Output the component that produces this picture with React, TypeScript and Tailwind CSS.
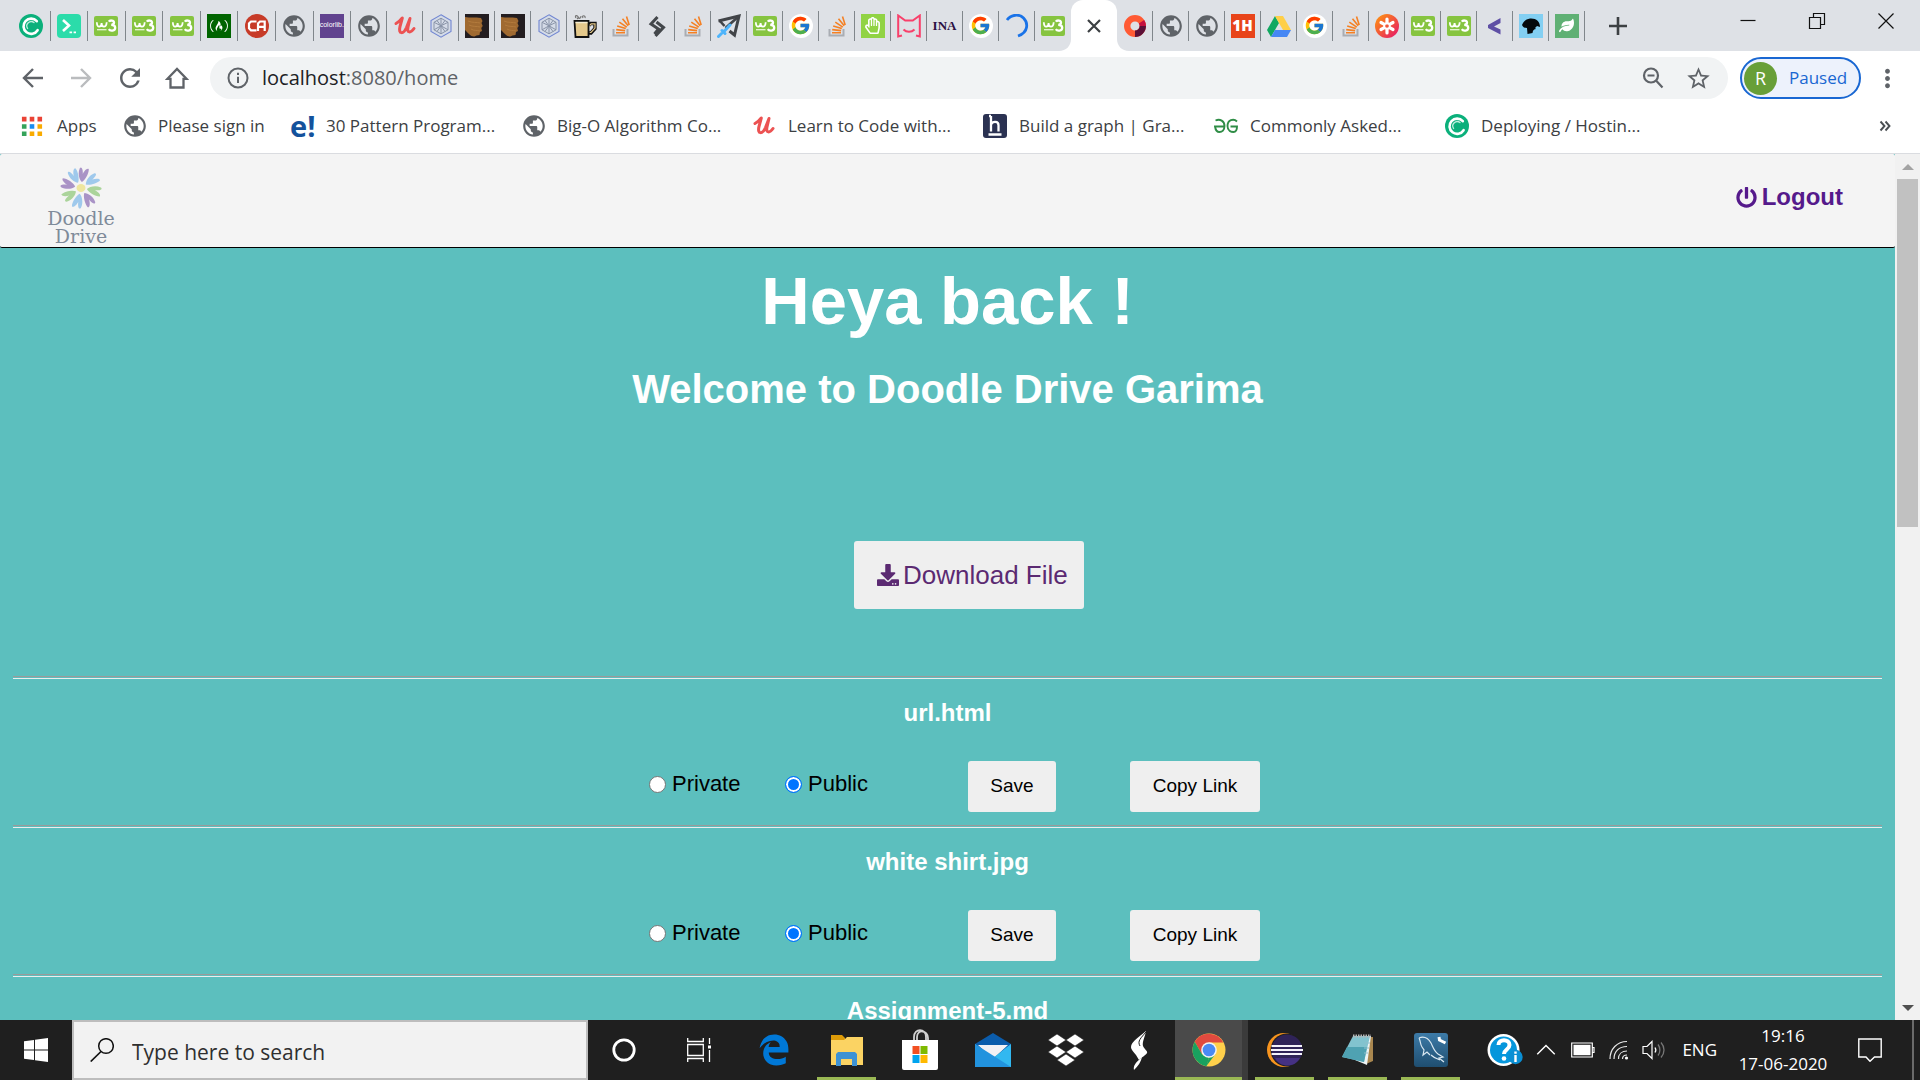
import type { ReactNode } from "react";
import { FaDownload, FaPowerOff, FaFreeCodeCamp, FaLeaf, FaEdgeLegacy, FaRegHandPaper } from "react-icons/fa";
import { MdPublic, MdStarBorder, MdRefresh, MdMoreVert } from "react-icons/md";
import { FcGoogle } from "react-icons/fc";

const uiFont = "font-['Segoe_UI','Open_Sans',sans-serif]";
const pageFont = "font-['Liberation_Sans',Arial,sans-serif]";

function Svg({ children, size = "size-6" }: { children: ReactNode; size?: string }) {
  return (
    <svg viewBox="0 0 24 24" className={`${size} shrink-0`} fill="none" aria-hidden="true">
      {children}
    </svg>
  );
}

const Crescent = () => (
  <Svg>
    <circle cx="12" cy="12" r="12" fill="#0bb07b" />
    <path d="M18.6 16.2A7.6 7.6 0 1 1 17.8 7.2" stroke="#fff" strokeWidth="2.6" strokeLinecap="round" />
    <path d="M8.6 14.5A4.4 4.4 0 0 1 15 8.6" stroke="#bdeedd" strokeWidth="1.3" strokeLinecap="round" />
  </Svg>
);
const Prompt = () => (
  <Svg>
    <rect width="24" height="24" rx="4" fill="#2bdcaa" />
    <path d="m6 6 6 5.5L6 17" stroke="#fff" strokeWidth="2.6" />
    <path d="M12.5 18.3h2.6M16.6 18.3h2.4" stroke="#fff" strokeWidth="1.8" />
  </Svg>
);
const W3 = () => (
  <Svg>
    <rect y="2" width="24" height="20" rx="2" fill="#86c440" />
    <path d="M2.8 8.2c.2 3 1 4.5 2.4 4.5S7.5 11 7.6 9c0 2.5.9 3.7 2.3 3.7 1.6 0 2.6-1.7 2.8-4.4" stroke="#fff" strokeWidth="1.8" />
    <path d="M14.8 7.6c1.200-1.8 5.200-1.3 5.200.9 0 1.6-1.4 2.3-2.8 2.3 1.8 0 4 .7 4 2.9 0 3.300-4.900 3.900-6.400 1.500" stroke="#fff" strokeWidth="2.300" />
    <path d="M3 15.7h9.5" stroke="#e8f5d8" strokeWidth="1.300" />
  </Svg>
);
const Fcc = () => (
  <span className="flex size-6 items-center justify-center bg-[#006400] text-white">
    <FaFreeCodeCamp className="size-[18px]" />
  </span>
);
const Ca = () => (
  <Svg>
    <circle cx="12" cy="12" r="12" fill="#c73b28" />
    <path d="M11.500 7.500H6l-2 2v4.800l2 2h5.500M13 17V9.500l2-2h4.700v9.500M13 12.800h6.500" stroke="#fff" strokeWidth="2.200" />
  </Svg>
);
const Globe = () => <MdPublic className="size-[26px] shrink-0 text-[#5f6368]" />;
const Colorlib = () => (
  <span className="flex size-6 items-center justify-center bg-[#61438f] font-['Liberation_Sans',sans-serif] text-[7px] text-white">
    colorlib.
  </span>
);
const Udemy = () => (
  <Svg>
    <path d="M3 9.500C5 8.500 7.500 6.500 9.300 4L7 12.500c-2 8 3.500 8 6.500 1L17 4.500l-2 8.500c-1.200 6 2.500 6.500 6 1.500" stroke="#ec5252" strokeWidth="3" strokeLinecap="round" strokeLinejoin="round" />
  </Svg>
);
const Hexa = () => (
  <Svg>
    <path d="M12 .8 22 6.500v11L12 23.200 2 17.500v-11z" fill="#d4dbe7" stroke="#7186d2" strokeWidth="1.100" />
    <path d="M12 4.200 19 8.300v7.500l-7 4-7-4V8.300zM5 8.300l7 3.500 7-3.500M12 4.200v15.600M5 15.800l7-4 7 4M8 6.500l8 11M16 6.500l-8 11" stroke="#8994a8" strokeWidth="1" />
  </Svg>
);
const Wood = () => (
  <Svg>
    <path d="M0 0h24v24H0z" fill="#231d20" />
    <path d="M0 3c5 1 10 0 16 1l1.500 3-1 2 1.200 3-1.400 2 .7 3-2 1-.5 3-3 .5-2 1C6 23 3 19 0 16z" fill="#a06a31" />
    <path d="M3 7c4 2 9 1 12 2M4 11c4 2 8 1 11 2M6 15c3 2 6 1 9 2" stroke="#b37b3d" strokeWidth="1" />
  </Svg>
);
const Mug = () => (
  <Svg>
    <path d="M3 4c-2-3 2-3 2-1s3 2 3-1M10 4c-2-3 3-3 2 0M4 5l2-2" stroke="#777" strokeWidth="1.200" />
    <path d="M16 11.500 17.500 9.500h4.500v5L18 19h-2" stroke="#111" strokeWidth="3.400" />
    <path d="M16.500 11.500 18.200 9.800h3.800v4.300L18 18.500h-1.500" stroke="#e5c98c" strokeWidth="1.200" />
    <path d="M1.500 7h14v16H2.500z" fill="#e5c98c" stroke="#111" strokeWidth="1.800" />
    <path d="M2.500 8.500h12" stroke="#f5ecd1" strokeWidth="1.500" />
  </Svg>
);
const Stack = () => (
  <Svg>
    <path d="M4.500 15v6.500h14V15" stroke="#a9adb3" strokeWidth="2" />
    <path d="M7 18.800h9M7.200 15.600l8.900 1M8.200 12l8.600 2.400M10.300 8.200l7.500 4.900M13.500 4.700l5.700 7M17.500 2.500l2.700 8.500" stroke="#f48024" strokeWidth="1.600" />
  </Svg>
);
const Diamond = () => (
  <Svg>
    <path d="m12.500 3-6.500 7 7.500 5-4 5M11.500 8l7 5.500-8 8.500" stroke="#43474b" strokeWidth="3" />
  </Svg>
);
const Arrow = () => (
  <Svg>
    <path d="M1.500 7 22 2l-4.500 19-5-4" stroke="#414448" strokeWidth="3" />
    <path d="m2.500 6.500 5 5.500M21.500 2.500 8.500 14" stroke="#414448" strokeWidth="2.600" />
    <path d="m13 11-6 6.500M4.500 19.500 1.500 22.500M8 19.500l-3-3" stroke="#4db4fb" strokeWidth="3" strokeLinecap="round" />
  </Svg>
);
const Google = () => (
  <span className="flex size-6 items-center justify-center rounded-full bg-white">
    <FcGoogle className="size-[21px]" />
  </span>
);
const Hand = () => (
  <span className="flex size-6 items-center justify-center bg-[#91d344] text-white">
    <FaRegHandPaper className="size-[17px]" />
  </span>
);
const PinkM = () => (
  <Svg>
    <path d="M5 21.500 1.200 22.500V1.500l7 5h7.600l7-5v21L19 21.500M6.500 15.500c3 3 8 3 11 0" stroke="#f8406b" strokeWidth="2" />
  </Svg>
);
const Isa = () => (
  <span className="font-['Liberation_Serif',serif] text-[13px] font-bold text-[#2b1043]">INA</span>
);
const Spinner = () => (
  <Svg>
    <path d="M2 6C6 .500 14-.5 18.500 4s5.500 14-5.500 18" stroke="#1a73e8" strokeWidth="2.800" />
  </Svg>
);
const RedRing = () => (
  <Svg>
    <circle cx="12" cy="12" r="7.800" stroke="#ff5a34" strokeWidth="6.400" />
    <path d="M19.800 12A7.800 7.800 0 0 1 12 19.800" stroke="#5c1038" strokeWidth="6.400" />
    <path d="M18.500 7.800A7.800 7.800 0 0 1 19.800 12" stroke="#c4103f" strokeWidth="6.400" />
  </Svg>
);
const OneH = () => (
  <span className="flex size-6 items-center justify-center bg-[#e8441a] font-['Open_Sans',sans-serif] text-[15px] font-extrabold text-white">
    1H
  </span>
);
const Drive = () => (
  <Svg>
    <path d="M8 2 0 16l4 7 8-14z" fill="#11a861" />
    <path d="M8 2h8l8 14h-8z" fill="#ffcf48" />
    <path d="M8 16h16l-4 7H4z" fill="#4687f4" />
  </Svg>
);
const Asterisk = () => (
  <Svg>
    <defs>
      <linearGradient id="ast" x1="0" y1="0" x2="1" y2="1">
        <stop stopColor="#ff9a0a" />
        <stop offset="1" stopColor="#e5126d" />
      </linearGradient>
    </defs>
    <circle cx="12" cy="12" r="12" fill="url(#ast)" />
    <path d="M12 5v4M12 15v4M6 8.500l3 1.700M15 13.800l3 1.700M6 15.500l3-1.700M15 10.200l3-1.700" stroke="#fff" strokeWidth="3.200" strokeLinecap="round" />
    <circle cx="12" cy="12" r="2.800" stroke="#fff" strokeWidth="1.800" />
  </Svg>
);
const Less = () => (
  <Svg>
    <path d="M17.500 4v5L11 12.500l6.500 3V20.500L5 14v-3z" fill="#5e4fa5" />
  </Svg>
);
const Head = () => (
  <Svg>
    <path d="M0 0h24v24H0z" fill="#83cff2" />
    <path d="M3 11c1-3 4-6 8-6.500 6-.5 10 3 10 8.500l-3-1-2 2 1 1c-2 0-3 1-3.500 4l-5 1-.5-6c-2 0-4-.5-5-3z" fill="#05090c" />
  </Svg>
);
const Leaf = () => (
  <span className="flex size-6 items-center justify-center bg-[#5fb074] text-white">
    <FaLeaf className="size-[15px]" />
  </span>
);

const firstTabs = [Crescent, Prompt, W3, W3, W3, Fcc, Ca, Globe, Colorlib];
const middleTabs = [Globe, Udemy, Hexa, Wood, Wood, Hexa, Mug, Stack, Diamond, Stack, Arrow, W3, Google, Stack, Hand, PinkM, Isa, Google, Spinner, W3];
const lastTabs = [RedRing, Globe, Globe, OneH, Drive, Google, Stack, Asterisk, W3, W3, Less, Head, Leaf];

function TabGroup({ icons, width, openEnd }: { icons: (() => ReactNode)[]; width: string; openEnd?: boolean }) {
  return (
    <div className={`${width} flex h-full items-center`}>
      {icons.map((Icon, i) => (
        <button
          key={i}
          aria-label={`Tab ${i + 1}`}
          className={`flex h-[30px] min-w-0 flex-1 items-center justify-center border-r ${
            openEnd && i === icons.length - 1 ? "border-transparent" : "border-[#80868b]"
          }`}
        >
          <Icon />
        </button>
      ))}
    </div>
  );
}

function TabStrip() {
  return (
    <div className="flex h-[51px] shrink-0 items-center bg-[#dee1e6] pl-[13px]">
      <TabGroup icons={firstTabs} width="w-[338px]" />
      <TabGroup icons={middleTabs} width="w-[720px]" openEnd />
      <div className="relative h-full w-[46px] rounded-t-xl bg-white">
        <svg viewBox="0 0 12 12" className="absolute bottom-0 -left-3 size-3" aria-hidden="true">
          <path d="M12 0v12H0C7 12 12 7 12 0z" fill="#fff" />
        </svg>
        <svg viewBox="0 0 12 12" className="absolute -right-3 bottom-0 size-3" aria-hidden="true">
          <path d="M0 0v12h12C5 12 0 7 0 0z" fill="#fff" />
        </svg>
        <button aria-label="Close tab" className="flex h-full w-full items-center justify-center">
          <Svg>
            <path d="m6 6 12 12M18 6 6 18" stroke="#3c4043" strokeWidth="2.200" />
          </Svg>
        </button>
      </div>
      <TabGroup icons={lastTabs} width="w-[468px]" />
      <button aria-label="New tab" className="ml-[21px]">
        <Svg>
          <path d="M12 3v18M3 12h18" stroke="#3c4043" strokeWidth="2.600" />
        </Svg>
      </button>
      <div className="ml-auto flex h-[42px] self-start">
        {[
          ["Minimize", "M4.500 11.500h15"],
          ["Restore", "M4.500 8.500h11v11h-11zM8.500 8V4.500h11v11H16"],
          ["Close", "m4.500 4.500 15 15M19.500 4.500l-15 15"],
        ].map(([label, d]) => (
          <button key={label} aria-label={label} className="flex w-[69px] items-center justify-center">
            <Svg>
              <path d={d} stroke="#111" strokeWidth="1.200" />
            </Svg>
          </button>
        ))}
      </div>
    </div>
  );
}

function Toolbar() {
  return (
    <div className="flex h-[54px] shrink-0 items-center bg-white pl-[21px] text-[#5f6368]">
      <button aria-label="Back" className="w-12">
        <Svg>
          <path d="M22 12H3.500M12 3 3 12l9 9" stroke="#5f6368" strokeWidth="2.400" />
        </Svg>
      </button>
      <button aria-label="Forward" className="w-12">
        <Svg>
          <path d="M2 12h18.500M12 3l9 9-9 9" stroke="#babcbe" strokeWidth="2.400" />
        </Svg>
      </button>
      <button aria-label="Reload" className="w-12">
        <MdRefresh className="-ml-0.5 size-[30px]" />
      </button>
      <button aria-label="Home" className="w-[45px]">
        <Svg>
          <path d="M2.500 12.800 12 3l9.500 9.800H18.500V21.500h-13v-8.700z" stroke="#5f6368" strokeWidth="2.300" />
        </Svg>
      </button>
      <div className="flex h-[42px] min-w-0 flex-1 items-center rounded-full bg-[#f1f3f4] px-4">
        <Svg>
          <circle cx="12" cy="12" r="9.500" stroke="#5f6368" strokeWidth="2" />
          <path d="M12 10.800V17M12 6.800v2.200" stroke="#5f6368" strokeWidth="2" />
        </Svg>
        <p className="ml-3 text-[20px] leading-7 text-[#5f6368]">
          <span className="text-[#202124]">localhost</span>:8080/home
        </p>
        <div className="ml-auto flex items-center gap-5">
          <button aria-label="Zoom">
            <Svg>
              <circle cx="10" cy="9.500" r="7" stroke="#5f6368" strokeWidth="2.200" />
              <path d="m15 14.500 6.500 7M6.500 9.500h7" stroke="#5f6368" strokeWidth="2.200" />
            </Svg>
          </button>
          <button aria-label="Bookmark this page">
            <MdStarBorder className="size-[27px]" />
          </button>
        </div>
      </div>
      <button className="ml-3 flex h-[42px] w-[121px] items-center rounded-full border-2 border-[#1967d2] bg-[#edf2fc] pl-0.5 text-[17px] text-[#1967d2]">
        <span className="flex size-[33px] items-center justify-center rounded-full bg-[#689f38] text-[18px] text-white">R</span>
        <span className="ml-3">Paused</span>
      </button>
      <button aria-label="Menu" className="mr-[18px] ml-3">
        <MdMoreVert className="size-[29px]" />
      </button>
    </div>
  );
}

const AppsGrid = () => (
  <Svg size="size-[22px]">
    <path d="M1 2h5v5H1zM9.500 2h5v5h-5zM18 2h5v5h-5z" fill="#ea4335" />
    <path d="M1 10h5v5H1zM1 18h5v5H1z" fill="#34a35a" />
    <path d="M9.500 10h5v5h-5z" fill="#1a8cf0" />
    <path d="M18 10h5v5h-5zM9.500 18h5v5h-5zM18 18h5v5h-5z" fill="#f9ab00" />
  </Svg>
);
const Ebang = () => (
  <span className="w-6 font-['Open_Sans',sans-serif] text-[29px] leading-6 font-bold text-[#14529c]">e!</span>
);
const HIcon = () => (
  <Svg>
    <rect width="24" height="24" rx="3" fill="#2b3252" />
    <path d="M8 2v15.500M8 10.500c1.500-3.500 7.500-3.500 7.500.8v6.200M5.500 20.500h13M6 2h2" stroke="#fff" strokeWidth="2.300" />
  </Svg>
);
const Gfg = () => (
  <Svg>
    <path d="M1.500 6.500c4.500-2 9 .5 9 5.500 0 4-2.500 6-5 6s-4-2-4.500-5.500h9.500M23 7.500c-3.500-3.500-9.500-1.500-9.500 4.500 0 5 4 6 6 6 2.500 0 3.500-2 3.500-5.500h-6.500" stroke="#2f8d46" strokeWidth="1.900" />
  </Svg>
);

const bookmarks: { label: string; icon: () => ReactNode; width: string; gap: string }[] = [
  { label: "Apps", icon: AppsGrid, width: "w-[101px]", gap: "gap-[14px]" },
  { label: "Please sign in", icon: Globe, width: "w-[168px]", gap: "gap-[10px]" },
  { label: "30 Pattern Program...", icon: Ebang, width: "w-[231px]", gap: "gap-3" },
  { label: "Big-O Algorithm Co...", icon: Globe, width: "w-[231px]", gap: "gap-[10px]" },
  { label: "Learn to Code with...", icon: Udemy, width: "w-[231px]", gap: "gap-3" },
  { label: "Build a graph | Gra...", icon: HIcon, width: "w-[231px]", gap: "gap-3" },
  { label: "Commonly Asked...", icon: Gfg, width: "w-[231px]", gap: "gap-3" },
  { label: "Deploying / Hostin...", icon: Crescent, width: "w-[231px]", gap: "gap-3" },
];

function BookmarksBar() {
  return (
    <nav className="flex h-[49px] shrink-0 items-center border-b border-[#dadce0] bg-white pb-1.5 pl-[21px] text-[17px] text-[#3c4043]">
      {bookmarks.map(({ label, icon: Icon, width, gap }) => (
        <a key={label} href="#" className={`${width} ${gap} flex shrink-0 items-center whitespace-nowrap`}>
          <Icon />
          {label}
        </a>
      ))}
      <button aria-label="More bookmarks" className="mr-[29px] ml-auto">
        <svg viewBox="0 0 12 12" className="size-3" fill="none">
          <path d="m1.500 1.500 4 4.500-4 4.500M6.500 1.500l4 4.500-4 4.500" stroke="#4a4e52" strokeWidth="1.900" />
        </svg>
      </button>
    </nav>
  );
}

const petals = ["#a993c6", "#9fc9ec", "#abd49b", "#a993c6", "#9fc9ec", "#abd49b", "#a993c6", "#9fc9ec"];

function DoodleLogo() {
  return (
    <a href="#" className="flex w-[70px] flex-col items-center font-['DejaVu_Serif',serif] text-[19px] leading-[18px] text-[#7f8b9a]">
      <svg viewBox="-24 -21 48 42" className="h-[42px] w-12" aria-hidden="true">
        {petals.map((fill, i) => (
          <path
            key={i}
            transform={`rotate(${8 + i * 46})`}
            d="M0-6C-3-8-5.500-14-4-19.500-2.500-22-.5-19-.2-14 .5-17 3-21 5-20 6-16 3-8 0-6z"
            fill={fill}
          />
        ))}
        <ellipse rx="4.500" ry="4" fill="#eee69f" />
      </svg>
      <span>Doodle</span>
      <span>Drive</span>
    </a>
  );
}

function Visibility({ name, label, width, checked }: { name: string; label: string; width: string; checked?: boolean }) {
  return (
    <label className={`${width} flex h-[46px] items-center gap-[6px] self-start text-[22px] leading-6 text-black`}>
      <input
        type="radio"
        name={name}
        defaultChecked={checked}
        className="size-[17px] appearance-none rounded-full border border-[#767676] bg-white checked:border-[#0075ff] checked:bg-[#0075ff] checked:shadow-[inset_0_0_0_2px_#fff]"
      />
      {label}
    </label>
  );
}

function FileRow({ name }: { name: string }) {
  return (
    <section>
      <hr className="h-[3px] border-t border-b border-t-[#9a9a9a] border-b-[#eeeeee]" />
      <div className="flex flex-col items-center pt-5 pb-[13px]">
        <h3 className="text-[24px] leading-7 font-bold text-white">{name}</h3>
        <form className="mt-[34px] flex h-[51px] pl-[14px]">
          <Visibility name={name} label="Private" width="w-[136px]" />
          <Visibility name={name} label="Public" width="w-[183px]" checked />
          <button type="button" className="w-[88px] rounded-[3px] bg-[#efefef] text-[19px] text-black">
            Save
          </button>
          <button type="button" className="ml-[74px] w-[130px] rounded-[3px] bg-[#efefef] text-[19px] text-black">
            Copy Link
          </button>
        </form>
      </div>
    </section>
  );
}

function Page() {
  return (
    <div className={`${pageFont} flex min-h-0 flex-1`}>
      <main className="min-w-0 flex-1 overflow-hidden bg-[#5cbfbe]">
        <header className="flex h-[94px] items-start justify-between rounded-xs border-b border-black bg-[#f4f4f4] pt-[13px] pr-[52px] pl-[46px]">
          <DoodleLogo />
          <a href="#" className="mt-4 flex items-center gap-[5px] text-[24px] leading-7 font-bold text-[#551a8b]">
            <FaPowerOff className="size-[21px]" />
            Logout
          </a>
        </header>
        <div className="flex flex-col items-center pt-[15px] text-white">
          <h1 className="text-[67px] leading-[76px] font-bold">Heya back !</h1>
          <h2 className="mt-7 text-[40px] leading-[44px] font-bold">Welcome to Doodle Drive Garima</h2>
          <button className="mt-[130px] ml-[43px] flex h-[68px] w-[230px] items-center gap-1 rounded-[3px] bg-[#efefef] pl-[23px] text-[26px] leading-8 whitespace-nowrap text-[#5b2a72]">
            <FaDownload className="size-[22px] shrink-0" />
            Download File
          </button>
        </div>
        <div className="mx-[13px] mt-[67px]">
          {["url.html", "white shirt.jpg", "Assignment-5.md"].map((name) => (
            <FileRow key={name} name={name} />
          ))}
        </div>
      </main>
      <div className="flex w-[25px] flex-col items-center justify-between bg-[#f1f1f1]">
        <div className="flex w-full flex-col items-center">
          <svg viewBox="0 0 12 6" className="mt-2.5 mb-[9px] h-1.5 w-3">
            <path d="M0 6 6 0l6 6z" fill="#a3a3a3" />
          </svg>
          <div className="h-[348px] w-[21px] bg-[#c1c1c1]" />
        </div>
        <svg viewBox="0 0 12 6" className="mb-[9px] h-1.5 w-3">
          <path d="M0 0h12L6 6z" fill="#505050" />
        </svg>
      </div>
    </div>
  );
}

const Folder = () => (
  <svg viewBox="0 0 36 36" className="size-9">
    <path d="M2 3h11l3 3v5H2z" fill="#dd9b08" />
    <path d="M2 8h13l3-3h16v28H2z" fill="#fbd363" />
    <path d="M7 34V22l2-2h17l2 2v12h-5v-7H12v7z" fill="#3e92d4" />
  </svg>
);
const Store = () => (
  <svg viewBox="0 0 36 42" className="h-[42px] w-9" fill="none">
    <path d="M12 12V8c0-9 12-9 12 0v4M15 12V8c0-8 11-7 11 1v3" stroke="#d0d0d0" strokeWidth="1.800" />
    <path d="M0 11h36v28q0 2-2 2H2q-2 0-2-2z" fill="#fff" />
    <path d="M10.500 17H17.500v8h-7z" fill="#f25022" />
    <path d="M18.500 17h7v8h-7z" fill="#7fba00" />
    <path d="M10.500 26h7v8h-7z" fill="#00a4ef" />
    <path d="M18.500 26h7v8h-7z" fill="#ffb900" />
  </svg>
);
const Mail = () => (
  <svg viewBox="0 0 36 36" className="size-9">
    <path d="M0 12 18 1l18 11v8H0z" fill="#0b5cab" />
    <path d="M3 13h30l-15 14z" fill="#f3f1f4" />
    <path d="M0 12v23h36V12L18 26z" fill="#32b8f0" />
    <path d="M0 12v23h36z" fill="#2293de" />
  </svg>
);
const DropboxIcon = () => (
  <svg viewBox="0 0 36 32" className="h-8 w-9" fill="#fff">
    <path d="m9 0 9 6-9 6-9-6zM27 0l9 6-9 6-9-6zM9 12l9 6-9 6-9-6zM27 12l9 6-9 6-9-6zM18 20l9 6-9 6-9-6z" stroke="#1f1f1f" strokeWidth=".6" />
  </svg>
);
const Lightning = () => (
  <svg viewBox="0 0 20 44" className="h-11 w-5" fill="#fff">
    <path d="M17 3C11 8 2 14 2 19c0 3 3 5 5 8l3 5c3-3 7-5 8-7s-3-4-4-7c-1-4 2-9 3-15z" />
    <path d="M11 31c-4 3-7 7-6 11 4-4 7-8 8-13z" />
    <path d="M17 4C12 10 8 13 11 18" stroke="#1f1f1f" fill="none" strokeWidth="1" />
  </svg>
);
const Chrome = () => (
  <svg viewBox="0 0 34 34" className="size-[34px]">
    <circle cx="17" cy="17" r="16.500" fill="#ffd04b" />
    <path d="M2.700 8.700A16.500 16.500 0 0 1 31.300 9.500H17L9.800 21z" fill="#e04a3f" />
    <path d="M2.700 8.700 10 21.200 17 24.800l-2.500 8.500A16.500 16.500 0 0 1 2.700 8.700z" fill="#19a15f" />
    <path d="M14.200 33.200 23.500 21 17 24.500z" fill="#19a15f" />
    <circle cx="17" cy="17" r="7.800" fill="#f3f3f3" />
    <circle cx="17" cy="17" r="6.300" fill="#4a8af4" />
  </svg>
);
const Eclipse = () => (
  <svg viewBox="0 0 36 34" className="h-[34px] w-9">
    <circle cx="17" cy="17" r="17" fill="#f7941e" />
    <circle cx="20" cy="17" r="16.500" fill="#1f1f1f" />
    <circle cx="20" cy="17" r="15.500" fill="#2f2358" />
    <path d="M8 25h25c-5 10-20 10-25 0z" fill="#453183" />
    <path d="M4.500 13H35M4 17h32M4.500 21H35" stroke="#f4f2fa" strokeWidth="2" />
  </svg>
);
const Notepad = () => (
  <svg viewBox="0 0 34 34" className="size-[34px]">
    <path d="M26 4h6v24l-7 3z" fill="#a9874f" />
    <path d="M12 3h18l-4 29-12-5z" fill="#eef4f5" />
    <path d="M12 3h17l-6 26L1 24z" fill="#82c3cf" />
    <path d="M6 14h20l-3 15L1 24z" fill="#4fa2b2" />
    <path d="M24 10h5M23 15h5M23 20h4" stroke="#8fbecb" />
    <path d="M12 3h18" stroke="#b7b7b7" strokeWidth="3" strokeDasharray="1.500 1" />
  </svg>
);
const Dolphin = () => (
  <svg viewBox="0 0 34 34" className="size-[34px]" fill="none">
    <defs>
      <linearGradient id="sea" x1="0" y1="0" x2="0" y2="1">
        <stop stopColor="#3d7ba8" />
        <stop offset="1" stopColor="#1f4e70" />
      </linearGradient>
    </defs>
    <rect width="34" height="34" rx="3" fill="url(#sea)" />
    <path d="M5 5c5-2 9 0 12 5 2 4 3 8 7 11l5 3-4 1 5 4M5 5c2 4 1 6 3 9l2 3-1 5 4-3 3 3M17 22c3 3 6 4 9 5" stroke="#dbe9f2" strokeWidth="1.200" />
    <path d="m25 4 .5 3 6 3" stroke="#fff" strokeWidth="3" />
  </svg>
);
const Help = () => (
  <svg viewBox="0 0 36 34" className="h-[34px] w-9" fill="none">
    <circle cx="16.500" cy="17" r="16" fill="#fff" />
    <circle cx="16.500" cy="17" r="13.500" fill="#0596dc" />
    <path d="M11.500 12c0-6.500 11-6.500 11 0 0 4.500-5.500 4.500-5.500 9" stroke="#fff" strokeWidth="4" />
    <circle cx="17" cy="25.500" r="2.300" fill="#fff" />
    <circle cx="28.500" cy="24" r="7.200" fill="#0a8fd4" />
    <path d="M28.500 22v7M28.500 18.500v2.200" stroke="#fff" strokeWidth="2.400" />
  </svg>
);

const apps: { name: string; icon: ReactNode; open?: boolean; active?: boolean }[] = [
  { name: "Edge", icon: <FaEdgeLegacy className="size-8 text-[#0078d7]" /> },
  { name: "File Explorer", icon: <Folder />, open: true },
  { name: "Store", icon: <Store /> },
  { name: "Mail", icon: <Mail /> },
  { name: "Dropbox", icon: <DropboxIcon /> },
  { name: "Launcher", icon: <Lightning /> },
  { name: "Chrome", icon: <Chrome />, active: true },
  { name: "Eclipse", icon: <Eclipse />, open: true },
  { name: "Notepad", icon: <Notepad />, open: true },
  { name: "MySQL Workbench", icon: <Dolphin />, open: true },
];

function Taskbar() {
  return (
    <footer className="flex h-[60px] shrink-0 items-stretch bg-[#1f1f1f] text-white">
      <button aria-label="Start" className="flex w-[72px] shrink-0 items-center justify-center">
        <Svg>
          <path d="M0 3.300 10 2v9.400H0zM11 1.800 24 0v11.400H11zM0 12.500h10V22L0 20.700zM11 12.500h13V24l-13-1.800z" fill="#fff" />
        </Svg>
      </button>
      <label className="flex w-[516px] shrink-0 items-center gap-[18px] border-2 border-[#bdbdbd] bg-[#f2f2f2] pl-4">
        <Svg>
          <circle cx="16" cy="8" r="7.300" stroke="#111" strokeWidth="1.500" />
          <path d="M11 13.500.7 23.500" stroke="#111" strokeWidth="1.700" />
        </Svg>
        <input
          type="text"
          aria-label="Search"
          placeholder="Type here to search"
          className="h-10 min-w-0 flex-1 bg-transparent pt-1 text-[21px] text-black outline-none placeholder:text-[#2f2f2f]"
        />
      </label>
      <button aria-label="Cortana" className="flex w-[72px] shrink-0 items-center justify-center">
        <Svg>
          <circle cx="12" cy="12" r="10.200" stroke="#fff" strokeWidth="2.800" />
        </Svg>
      </button>
      <button aria-label="Task View" className="flex w-[77px] shrink-0 items-center justify-center">
        <Svg>
          <path d="M.7 0v3.500h15.600V0M.7 24v-3.500h15.600V24M.7 6.500h15.600v11H.7zM22.500 0v6M22.500 12v12" stroke="#fff" strokeWidth="1.300" />
          <path d="M21 7.500h3v3h-3z" fill="#fff" />
        </Svg>
      </button>
      {apps.map((app) => (
        <button
          key={app.name}
          aria-label={app.name}
          className={`relative flex w-[73px] shrink-0 items-center justify-center ${app.active ? "border-r-[6px] border-[#3b3b3b] bg-[#4a4a4a]" : ""}`}
        >
          {app.icon}
          {app.open && <span className="absolute inset-x-[7px] bottom-0 h-[3px] bg-[#9ab854]" />}
          {app.active && <span className="absolute inset-x-0 bottom-0 h-[3px] bg-[#9ab854]" />}
        </button>
      ))}
      <div className="flex min-w-0 flex-1 items-center">
        <button aria-label="Help" className="mr-[13px] ml-5 shrink-0">
          <Help />
        </button>
        <button aria-label="Show hidden icons" className="w-[35px] shrink-0">
          <Svg size="size-5">
            <path d="m1.500 17 10.500-10.500L22.500 17" stroke="#fff" strokeWidth="1.700" />
          </Svg>
        </button>
        <svg viewBox="0 0 24 16" className="mr-[14px] h-4 w-6 shrink-0" fill="none">
          <path d="M.7 1h20.600v14H.7zM21.500 5.500h1.500v5h-1.500" stroke="#fff" strokeWidth="1.200" />
          <path d="M2.500 2.800h17v10.400h-17z" fill="#fff" />
        </svg>
        <svg viewBox="0 0 20 20" className="mr-[13px] size-5 shrink-0" fill="none">
          <path d="M1 19C1 9 8 1.500 18 1.500M5 19c0-7.500 5-12.500 13-12.500M9.500 19c0-5 3.500-8 8.500-8M13.500 19c0-2.500 1.500-4 4.500-4" stroke="#e8e8e8" strokeWidth="1.200" />
          <circle cx="17.500" cy="18" r="1.600" fill="#fff" />
        </svg>
        <svg viewBox="0 0 24 20" className="h-5 w-6 shrink-0" fill="none">
          <path d="M1 6.500h4l5-5v17l-5-5H1z" stroke="#fff" strokeWidth="1.200" />
          <path d="M13 7.500c1 1.500 1 3.500 0 5" stroke="#fff" strokeWidth="1.300" />
          <path d="M16 4.500c2.500 3 2.500 8 0 11M19 2.500c4 4.500 4 10.500 0 15" stroke="#777" strokeWidth="1.300" />
        </svg>
        <span className="ml-auto text-[17px]">ENG</span>
        <div className="ml-[17px] flex w-[98px] flex-col items-center text-[17px] leading-[28px]">
          <span>19:16</span>
          <span>17-06-2020</span>
        </div>
        <button aria-label="Notifications" className="mr-[30px] ml-[26px] shrink-0">
          <Svg>
            <path d="M.8 1h22.400v18H16.500L12 23.300 8 19H.8z" stroke="#fff" strokeWidth="1.400" />
          </Svg>
        </button>
        <div className="h-full w-2 shrink-0 border-l-2 border-[#6a6a6a]" />
      </div>
    </footer>
  );
}

export default function App() {
  return (
    <div className={`${uiFont} flex h-screen flex-col overflow-hidden bg-white`}>
      <TabStrip />
      <Toolbar />
      <BookmarksBar />
      <Page />
      <Taskbar />
    </div>
  );
}
